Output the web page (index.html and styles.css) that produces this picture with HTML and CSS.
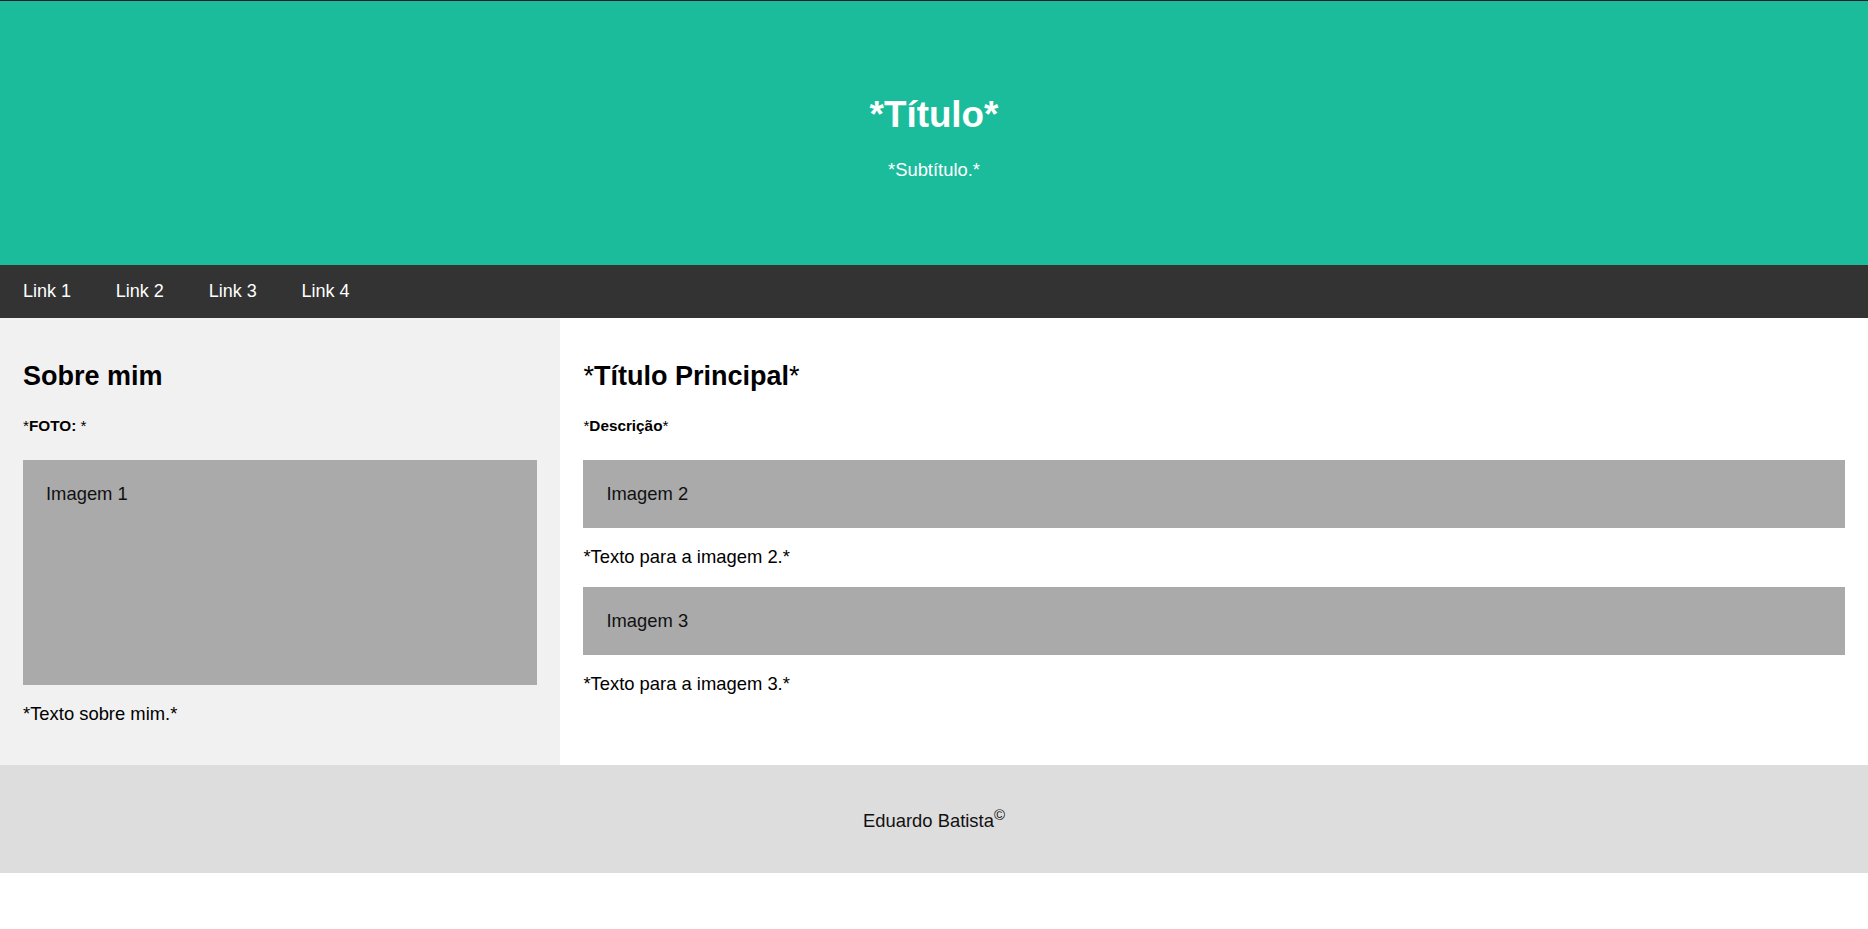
FILE: index.html
```html
<!DOCTYPE html>
<html lang="pt-BR">
<head>
<meta charset="utf-8">
<title>Eduardo Batista</title>
<link rel="stylesheet" href="styles.css">
</head>
<body>
<header class="header">
  <h1 class="header-title">*Título*</h1>
  <p class="header-sub">*Subtítulo.*</p>
</header>
<nav class="navbar">
  <a class="nav-link" href="#">Link 1</a>
  <a class="nav-link" href="#">Link 2</a>
  <a class="nav-link" href="#">Link 3</a>
  <a class="nav-link" href="#">Link 4</a>
</nav>
<div class="row">
  <aside class="side">
    <h2 class="sec-title">Sobre mim</h2>
    <h5 class="sec-sub"><span class="ast">*</span>FOTO: <span class="ast">*</span></h5>
    <div class="fakeimg fakeimg-tall">Imagem 1</div>
    <p class="text">*Texto sobre mim.*</p>
  </aside>
  <main class="main">
    <h2 class="sec-title"><span class="ast">*</span>Título Principal<span class="ast">*</span></h2>
    <h5 class="sec-sub"><span class="ast">*</span>Descrição<span class="ast">*</span></h5>
    <div class="fakeimg">Imagem 2</div>
    <p class="text">*Texto para a imagem 2.*</p>
    <div class="fakeimg">Imagem 3</div>
    <p class="text">*Texto para a imagem 3.*</p>
  </main>
</div>
<footer class="footer">
  <p class="footer-text">Eduardo Batista<sup class="copy">©</sup></p>
</footer>
</body>
</html>
```
FILE: styles.css
```css
* {
  box-sizing: border-box;
}

body {
  margin: 0;
  font-family: "Liberation Sans", Arial, sans-serif;
  font-size: 18.4px;
  color: #000;
  background: #fff;
}

.header {
  border-top: 1px solid #1b1d2a;
  padding: 69px;
  text-align: center;
  background: #1abc9c;
  color: #fff;
}

.header-title {
  font-size: 36.8px;
  font-weight: bold;
  margin: 23.5px 0 23.5px;
}

.header-sub {
  margin: 18.4px 0 14.6px;
}

.navbar {
  display: flex;
  background-color: #333;
}

.nav-link {
  display: block;
  color: #fff;
  text-decoration: none;
  font-size: 18px;
  padding: 16px 22.4px;
  line-height: 21.4px;
}

.nav-link:first-child {
  padding-left: 23px;
}

.row {
  display: flex;
}

.side {
  flex: 0 0 30%;
  background-color: #f1f1f1;
  padding: 23px 23px 21px;
}

.main {
  flex: 1 1 70%;
  background-color: #fff;
  padding: 23px 23px 21px;
}

.sec-title {
  font-size: 27px;
  margin: 20px 0 25px;
}

.sec-sub {
  font-size: 15.3px;
  margin: 25px 0;
}

.ast {
  font-weight: normal;
}

.fakeimg {
  background-color: #aaa;
  width: 100%;
  padding: 23px 22px 23px 23px;
  color: #111;
}

.fakeimg-tall {
  height: 225px;
}

.text {
  margin: 18.4px 0;
}

.footer {
  padding: 23px;
  text-align: center;
  background: #ddd;
}

.footer-text {
  margin: 18px 0;
  color: #111;
}

.copy {
  font-size: 15px;
}
```
